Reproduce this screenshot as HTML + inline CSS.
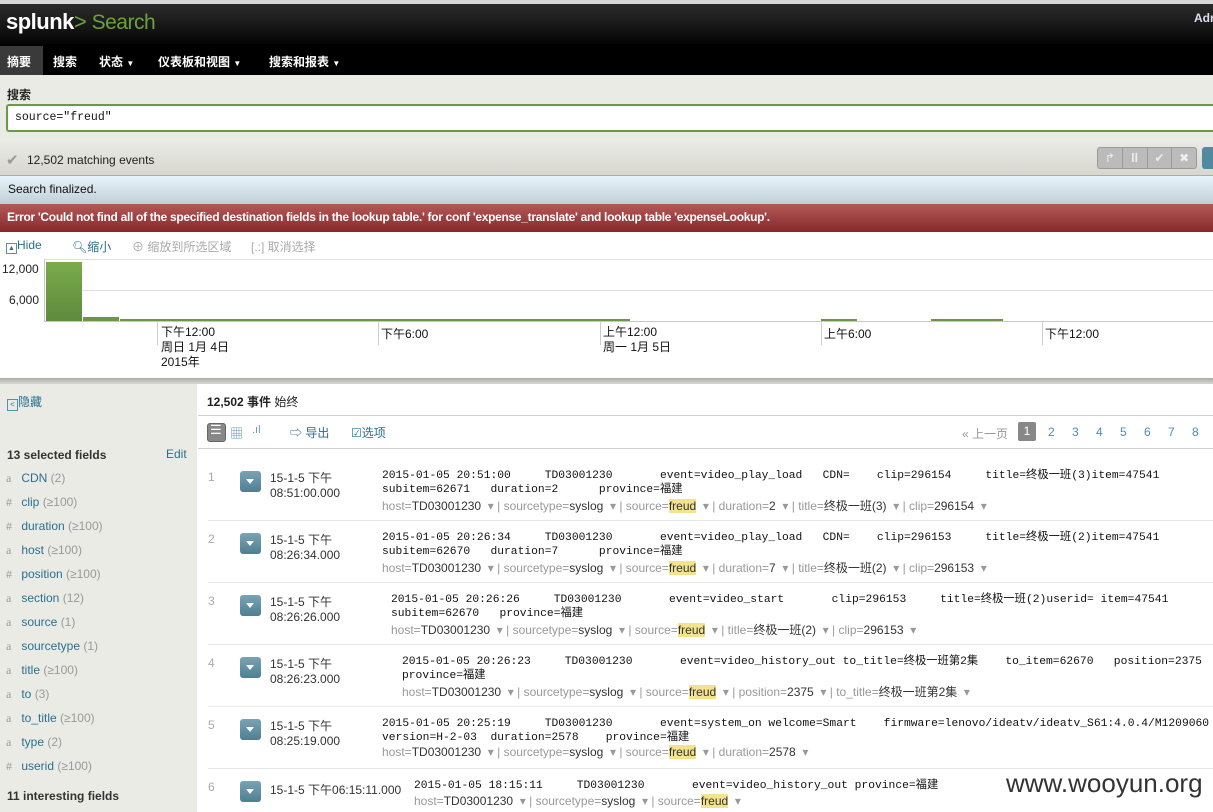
<!DOCTYPE html>
<html><head><meta charset="utf-8">
<style>
*{margin:0;padding:0;box-sizing:border-box}
body{width:1213px;height:812px;overflow:hidden;position:relative;font-family:"Liberation Sans","Noto Sans CJK SC",sans-serif;font-size:12px;background:#fff;color:#333}
.a{position:absolute;white-space:nowrap}
.mono{font-family:"Liberation Mono","Noto Sans CJK SC",monospace;font-size:11.3px;color:#111}
.f{color:#999;font-size:12px}
.f b{font-weight:normal;color:#333}
.f i{font-style:normal;color:#333;background:#f3e28e}
.btn{position:absolute;left:240px;width:21px;height:21px;border-radius:3px;background:linear-gradient(#7aa3b3,#4d7f93)}
.btn:after{content:"";position:absolute;left:6px;top:8px;border-left:4.5px solid transparent;border-right:4.5px solid transparent;border-top:5px solid #fff}
.fld{position:absolute;left:6px;font-size:12px;color:#2a6f8f}
.fld span{color:#999}
.fld em{font-style:normal;color:#999;font-family:"Liberation Serif",serif;font-size:12px;display:inline-block;width:12px}
.sep{position:absolute;left:208px;right:0;height:1px;background:#e8e8e8}
.pg{position:absolute;top:425px;color:#4a8fb5;font-size:12px}
.tk{position:absolute;top:321px;width:1px;height:24px;background:#ccc}
</style></head><body>
<div class="a" style="left:0;top:0;width:1213px;height:4px;background:#d8d8d8"></div>
<div class="a" style="left:0;top:4px;width:1213px;height:40px;background:linear-gradient(#2c2c2c,#050505)"></div>
<div class="a" style="left:6px;top:9px;font-size:22px;color:#fff;letter-spacing:-0.5px;font-weight:bold">splunk<span style="color:#6aa339;font-weight:normal">&gt;</span><span style="color:#6aa339;font-weight:normal;font-size:21px"> Search</span></div>
<div class="a" style="left:1194px;top:11px;font-size:12px;color:#dde;font-weight:bold">Adr</div>
<div class="a" style="left:0;top:44px;width:1213px;height:31px;background:#000"></div>
<div class="a" style="left:0;top:46px;width:43px;height:29px;background:#3a3a3a"></div>
<div class="a" style="left:7px;top:53px;color:#fff;font-weight:bold;font-size:12px">摘要</div>
<div class="a" style="left:53px;top:53px;color:#fff;font-weight:bold;font-size:12px">搜索</div>
<div class="a" style="left:99px;top:53px;color:#fff;font-weight:bold;font-size:12px">状态 <span style="font-size:8px">▼</span></div>
<div class="a" style="left:158px;top:53px;color:#fff;font-weight:bold;font-size:12px">仪表板和视图 <span style="font-size:8px">▼</span></div>
<div class="a" style="left:269px;top:53px;color:#fff;font-weight:bold;font-size:12px">搜索和报表 <span style="font-size:8px">▼</span></div>
<div class="a" style="left:0;top:75px;width:1213px;height:65px;background:#ebebe6"></div>
<div class="a" style="left:7px;top:86px;font-weight:bold;font-size:12px;color:#222">搜索</div>
<div class="a" style="left:6px;top:104px;width:1210px;height:28px;background:#fff;border:2px solid #6a9a45;border-right:none;border-radius:3px 0 0 3px"></div>
<div class="a mono" style="left:15px;top:111px;font-size:11.5px">source="freud"</div>
<div class="a" style="left:0;top:140px;width:1213px;height:36px;background:linear-gradient(#ebebe6,#d7d7d0);border-bottom:1px solid #aaa"></div>
<div class="a" style="left:6px;top:151px;color:#999;font-size:15px">✔</div>
<div class="a" style="left:27px;top:153px;font-size:12px;color:#222">12,502 matching events</div>
<div class="a" style="left:1097px;top:147px;width:100px;height:22px;border:1px solid #999;border-radius:3px;background:#bbb;display:flex">
<div style="flex:1;border-right:1px solid #999;color:#eee;text-align:center;font-size:12px;line-height:20px">↱</div><div style="flex:1;border-right:1px solid #999;color:#eee;text-align:center;font-weight:bold;line-height:20px">ll</div><div style="flex:1;border-right:1px solid #999;color:#eee;text-align:center;line-height:20px">✔</div><div style="flex:1;color:#eee;text-align:center;line-height:20px">✖</div></div>
<div class="a" style="left:1202px;top:147px;width:14px;height:22px;border-radius:3px;background:#4f8aa0"></div>
<div class="a" style="left:0;top:176px;width:1213px;height:28px;background:linear-gradient(#e8f4fa,#c0cfd6)"></div>
<div class="a" style="left:8px;top:182px;font-size:12px;color:#111">Search finalized.</div>
<div class="a" style="left:0;top:204px;width:1213px;height:28px;background:linear-gradient(#b45858,#86292b)"></div>
<div class="a" style="left:7px;top:210px;font-size:12px;color:#fff;font-weight:bold;letter-spacing:-0.3px">Error 'Could not find all of the specified destination fields in the lookup table.' for conf 'expense_translate' and lookup table 'expenseLookup'.</div>
<div class="a" style="left:6px;top:238px;font-size:12px;color:#2a6f8f"><span style="display:inline-block;width:11px;height:11px;border:1px solid #5a8fa8;font-size:7px;line-height:9px;text-align:center;vertical-align:-1px">▲</span>Hide</div>
<div class="a" style="left:72px;top:238px;font-size:12px;color:#2a6f8f">🔍︎缩小</div>
<div class="a" style="left:132px;top:238px;font-size:12px;color:#aaa">⊕ 缩放到所选区域</div>
<div class="a" style="left:251px;top:238px;font-size:12px;color:#aaa">[.:] 取消选择</div>
<div class="a" style="left:45px;top:259px;width:1168px;height:1px;background:#e0e0e0"></div>
<div class="a" style="left:45px;top:290px;width:1168px;height:1px;background:#e0e0e0"></div>
<div class="a" style="left:45px;top:321px;width:1168px;height:1px;background:#c8c8c8"></div>
<div class="a" style="left:44px;top:259px;width:1px;height:63px;background:#c8c8c8"></div>
<div class="a" style="left:2px;top:262px;font-size:12px;color:#222">12,000</div>
<div class="a" style="left:9px;top:293px;font-size:12px;color:#222">6,000</div>
<div class="a" style="left:46px;top:262px;width:36px;height:59px;background:linear-gradient(#7aab4c,#5e8a3e)"></div>
<div class="a" style="left:83px;top:317px;width:36px;height:4px;background:#6a9645"></div>
<div class="a" style="left:120px;top:319px;width:510px;height:2px;background:#6a9645"></div>
<div class="a" style="left:821px;top:319px;width:36px;height:2px;background:#6a9645"></div>
<div class="a" style="left:931px;top:319px;width:72px;height:2px;background:#6a9645"></div>
<div class="tk" style="left:157px"></div><div class="tk" style="left:378px"></div><div class="tk" style="left:600px"></div><div class="tk" style="left:821px"></div><div class="tk" style="left:1042px"></div>
<div class="a" style="left:161px;top:325px;font-size:12px;line-height:15px;color:#111">下午12:00<br>周日 1月 4日<br>2015年</div>
<div class="a" style="left:381px;top:325px;font-size:12px;color:#111">下午6:00</div>
<div class="a" style="left:603px;top:325px;font-size:12px;line-height:15px;color:#111">上午12:00<br>周一 1月 5日</div>
<div class="a" style="left:824px;top:325px;font-size:12px;color:#111">上午6:00</div>
<div class="a" style="left:1045px;top:325px;font-size:12px;color:#111">下午12:00</div>
<div class="a" style="left:0;top:378px;width:1213px;height:6px;background:linear-gradient(#aaa,#d8d8d2)"></div>
<div class="a" style="left:0;top:384px;width:197px;height:428px;background:#ebebe6"></div>
<div class="a" style="left:7px;top:393px;font-size:12px;color:#2a6f8f"><span style="display:inline-block;width:11px;height:12px;border:1px solid #5a8fa8;font-size:8px;line-height:10px;text-align:center;vertical-align:-1px">&lt;</span>隐藏</div>
<div class="a" style="left:7px;top:448px;font-size:12px;font-weight:bold;color:#333">13 selected fields</div>
<div class="a" style="left:166px;top:447px;font-size:12px;color:#2a6f8f">Edit</div>
<div class="fld" style="top:471px"><em>a</em> CDN <span>(2)</span></div>
<div class="fld" style="top:495px"><em>#</em> clip <span>(≥100)</span></div>
<div class="fld" style="top:519px"><em>#</em> duration <span>(≥100)</span></div>
<div class="fld" style="top:543px"><em>a</em> host <span>(≥100)</span></div>
<div class="fld" style="top:567px"><em>#</em> position <span>(≥100)</span></div>
<div class="fld" style="top:591px"><em>a</em> section <span>(12)</span></div>
<div class="fld" style="top:615px"><em>a</em> source <span>(1)</span></div>
<div class="fld" style="top:639px"><em>a</em> sourcetype <span>(1)</span></div>
<div class="fld" style="top:663px"><em>a</em> title <span>(≥100)</span></div>
<div class="fld" style="top:687px"><em>a</em> to <span>(3)</span></div>
<div class="fld" style="top:711px"><em>a</em> to_title <span>(≥100)</span></div>
<div class="fld" style="top:735px"><em>a</em> type <span>(2)</span></div>
<div class="fld" style="top:759px"><em>#</em> userid <span>(≥100)</span></div>
<div class="a" style="left:7px;top:789px;font-size:12px;font-weight:bold;color:#333">11 interesting fields</div>
<div class="a" style="left:198px;top:384px;width:1015px;height:428px;background:#fff;border-radius:4px 0 0 0"></div>
<div class="a" style="left:207px;top:393px;font-size:12px;color:#222"><b>12,502 事件</b> 始终</div>
<div class="a" style="left:198px;top:415px;width:1015px;height:1px;background:#d0d0d0"></div>
<div class="a" style="left:207px;top:423px;width:19px;height:19px;border-radius:3px;background:#888;border:1px solid #666"></div>
<div class="a" style="left:210px;top:422px;color:#fff;font-size:13px">☰</div>
<div class="a" style="left:230px;top:423px;color:#6a9ab5;font-size:13px">▦</div>
<div class="a" style="left:252px;top:424px;color:#6a9ab5;font-size:11px">.ıl</div>
<div class="a" style="left:290px;top:424px;font-size:12px;color:#2a6f8f">⇨ 导出</div>
<div class="a" style="left:351px;top:424px;font-size:12px;color:#2a6f8f">☑选项</div>
<div class="a" style="left:962px;top:425px;font-size:12px;color:#999">« 上一页</div>
<div class="a" style="left:1018px;top:422px;width:18px;height:19px;border-radius:2px;background:#888;color:#fff;text-align:center;line-height:19px;font-size:12px">1</div>
<div class="pg" style="left:1048px">2</div><div class="pg" style="left:1072px">3</div><div class="pg" style="left:1096px">4</div><div class="pg" style="left:1120px">5</div><div class="pg" style="left:1144px">6</div><div class="pg" style="left:1168px">7</div><div class="pg" style="left:1192px">8</div>
<div class="a" style="left:198px;top:448px;width:1015px;height:1px;background:#d0d0d0"></div>

<div class="a" style="left:208px;top:470px;color:#aaa;font-size:12px">1</div><div class="btn" style="top:471px"></div>
<div class="a" style="left:270px;top:471px;font-size:12px;line-height:15px;color:#333">15-1-5 下午<br>08:51:00.000</div>
<div class="a mono" style="left:382px;top:469px;line-height:14px">2015-01-05 20:51:00&nbsp;&nbsp;&nbsp;&nbsp;&nbsp;TD03001230&nbsp;&nbsp;&nbsp;&nbsp;&nbsp;&nbsp;&nbsp;event=video_play_load&nbsp;&nbsp;&nbsp;CDN=&nbsp;&nbsp;&nbsp;&nbsp;clip=296154&nbsp;&nbsp;&nbsp;&nbsp;&nbsp;title=终极一班(3)item=47541<br>subitem=62671&nbsp;&nbsp;&nbsp;duration=2&nbsp;&nbsp;&nbsp;&nbsp;&nbsp;&nbsp;province=福建</div>
<div class="a f" style="left:382px;top:497px">host=<b>TD03001230</b> &nbsp;▾ | sourcetype=<b>syslog</b> &nbsp;▾ | source=<i>freud</i> &nbsp;▾ | duration=<b>2</b> &nbsp;▾ | title=<b>终极一班(3)</b> &nbsp;▾ | clip=<b>296154</b> &nbsp;▾</div>
<div class="sep" style="top:520px"></div>

<div class="a" style="left:208px;top:532px;color:#aaa;font-size:12px">2</div><div class="btn" style="top:533px"></div>
<div class="a" style="left:270px;top:533px;font-size:12px;line-height:15px;color:#333">15-1-5 下午<br>08:26:34.000</div>
<div class="a mono" style="left:382px;top:531px;line-height:14px">2015-01-05 20:26:34&nbsp;&nbsp;&nbsp;&nbsp;&nbsp;TD03001230&nbsp;&nbsp;&nbsp;&nbsp;&nbsp;&nbsp;&nbsp;event=video_play_load&nbsp;&nbsp;&nbsp;CDN=&nbsp;&nbsp;&nbsp;&nbsp;clip=296153&nbsp;&nbsp;&nbsp;&nbsp;&nbsp;title=终极一班(2)item=47541<br>subitem=62670&nbsp;&nbsp;&nbsp;duration=7&nbsp;&nbsp;&nbsp;&nbsp;&nbsp;&nbsp;province=福建</div>
<div class="a f" style="left:382px;top:559px">host=<b>TD03001230</b> &nbsp;▾ | sourcetype=<b>syslog</b> &nbsp;▾ | source=<i>freud</i> &nbsp;▾ | duration=<b>7</b> &nbsp;▾ | title=<b>终极一班(2)</b> &nbsp;▾ | clip=<b>296153</b> &nbsp;▾</div>
<div class="sep" style="top:582px"></div>

<div class="a" style="left:208px;top:594px;color:#aaa;font-size:12px">3</div><div class="btn" style="top:595px"></div>
<div class="a" style="left:270px;top:595px;font-size:12px;line-height:15px;color:#333">15-1-5 下午<br>08:26:26.000</div>
<div class="a mono" style="left:391px;top:593px;line-height:14px">2015-01-05 20:26:26&nbsp;&nbsp;&nbsp;&nbsp;&nbsp;TD03001230&nbsp;&nbsp;&nbsp;&nbsp;&nbsp;&nbsp;&nbsp;event=video_start&nbsp;&nbsp;&nbsp;&nbsp;&nbsp;&nbsp;&nbsp;clip=296153&nbsp;&nbsp;&nbsp;&nbsp;&nbsp;title=终极一班(2)userid= item=47541<br>subitem=62670&nbsp;&nbsp;&nbsp;province=福建</div>
<div class="a f" style="left:391px;top:621px">host=<b>TD03001230</b> &nbsp;▾ | sourcetype=<b>syslog</b> &nbsp;▾ | source=<i>freud</i> &nbsp;▾ | title=<b>终极一班(2)</b> &nbsp;▾ | clip=<b>296153</b> &nbsp;▾</div>
<div class="sep" style="top:644px"></div>

<div class="a" style="left:208px;top:656px;color:#aaa;font-size:12px">4</div><div class="btn" style="top:657px"></div>
<div class="a" style="left:270px;top:657px;font-size:12px;line-height:15px;color:#333">15-1-5 下午<br>08:26:23.000</div>
<div class="a mono" style="left:402px;top:655px;line-height:14px">2015-01-05 20:26:23&nbsp;&nbsp;&nbsp;&nbsp;&nbsp;TD03001230&nbsp;&nbsp;&nbsp;&nbsp;&nbsp;&nbsp;&nbsp;event=video_history_out to_title=终极一班第2集&nbsp;&nbsp;&nbsp;&nbsp;to_item=62670&nbsp;&nbsp;&nbsp;position=2375<br>province=福建</div>
<div class="a f" style="left:402px;top:683px">host=<b>TD03001230</b> &nbsp;▾ | sourcetype=<b>syslog</b> &nbsp;▾ | source=<i>freud</i> &nbsp;▾ | position=<b>2375</b> &nbsp;▾ | to_title=<b>终极一班第2集</b> &nbsp;▾</div>
<div class="sep" style="top:706px"></div>

<div class="a" style="left:208px;top:718px;color:#aaa;font-size:12px">5</div><div class="btn" style="top:719px"></div>
<div class="a" style="left:270px;top:719px;font-size:12px;line-height:15px;color:#333">15-1-5 下午<br>08:25:19.000</div>
<div class="a mono" style="left:382px;top:717px;line-height:14px">2015-01-05 20:25:19&nbsp;&nbsp;&nbsp;&nbsp;&nbsp;TD03001230&nbsp;&nbsp;&nbsp;&nbsp;&nbsp;&nbsp;&nbsp;event=system_on welcome=Smart&nbsp;&nbsp;&nbsp;&nbsp;firmware=lenovo/ideatv/ideatv_S61:4.0.4/M1209060<br>version=H-2-03&nbsp;&nbsp;duration=2578&nbsp;&nbsp;&nbsp;&nbsp;province=福建</div>
<div class="a f" style="left:382px;top:745px">host=<b>TD03001230</b> &nbsp;▾ | sourcetype=<b>syslog</b> &nbsp;▾ | source=<i>freud</i> &nbsp;▾ | duration=<b>2578</b> &nbsp;▾</div>
<div class="sep" style="top:768px"></div>

<div class="a" style="left:208px;top:780px;color:#aaa;font-size:12px">6</div><div class="btn" style="top:781px"></div>
<div class="a" style="left:270px;top:781px;font-size:12px;color:#333">15-1-5 下午06:15:11.000</div>
<div class="a mono" style="left:414px;top:779px;line-height:14px">2015-01-05 18:15:11&nbsp;&nbsp;&nbsp;&nbsp;&nbsp;TD03001230&nbsp;&nbsp;&nbsp;&nbsp;&nbsp;&nbsp;&nbsp;event=video_history_out province=福建</div>
<div class="a f" style="left:414px;top:794px">host=<b>TD03001230</b> &nbsp;▾ | sourcetype=<b>syslog</b> &nbsp;▾ | source=<i>freud</i> &nbsp;▾</div>
<div class="a" style="left:1006px;top:768px;font-size:26px;color:#333">www.wooyun.org</div>
</body></html>
